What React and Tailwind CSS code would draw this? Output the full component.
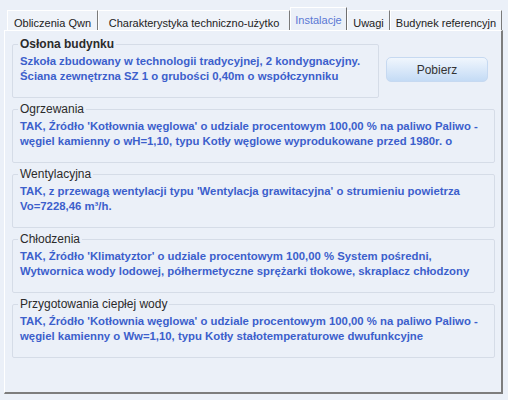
import React from 'react';

const tabs = [
  { label: 'Obliczenia Qwn', w: 'w-[91px]' },
  { label: 'Charakterystyka techniczno-użytko', w: 'w-[192px]' },
  { label: 'Instalacje', w: 'w-[57px]', active: true },
  { label: 'Uwagi', w: 'w-[43px]' },
  { label: 'Budynek referencyjn', w: 'w-[112px]' },
];

const sections = [
  {
    title: 'Ogrzewania',
    lines: [
      "TAK, Źródło 'Kotłownia węglowa' o udziale procentowym 100,00 % na paliwo Paliwo -",
      'węgiel kamienny o wH=1,10, typu Kotły węglowe wyprodukowane przed 1980r. o',
    ],
  },
  {
    title: 'Wentylacyjna',
    lines: [
      "TAK, z przewagą wentylacji typu 'Wentylacja grawitacyjna' o strumieniu powietrza",
      'Vo=7228,46 m³/h.',
    ],
  },
  {
    title: 'Chłodzenia',
    lines: [
      "TAK, Źródło 'Klimatyztor' o udziale procentowym 100,00 % System pośredni,",
      'Wytwornica wody lodowej, półhermetyczne sprężarki tłokowe, skraplacz chłodzony',
    ],
  },
  {
    title: 'Przygotowania ciepłej wody',
    lines: [
      "TAK, Źródło 'Kotłownia węglowa' o udziale procentowym 100,00 % na paliwo Paliwo -",
      'węgiel kamienny o Ww=1,10, typu Kotły stałotemperaturowe dwufunkcyjne',
    ],
  },
];

const GroupBox = ({ title, lines, bold, className }) => (
  <fieldset className={`h-[61px] border border-[#d5dce7] rounded-[2px] px-[7px] ${className}`}>
    <legend className={`text-[12px] leading-[14px] text-[#2b2b2b] px-[2px] -ml-[2px] ${bold ? 'font-bold' : ''}`}>
      {title}
    </legend>
    <div className="pt-[3px] text-[11.35px] leading-[15px] font-bold text-[#3c5fcc] whitespace-nowrap">
      {lines.map((l, i) => (
        <div key={i}>{l}</div>
      ))}
    </div>
  </fieldset>
);

const App = () => {
  return (
    <div className="w-[508px] h-[400px] bg-[#ebf0f8] font-['Liberation_Sans',Arial,sans-serif] pt-[6px] pl-[4px] overflow-hidden">
      {/* zakładki */}
      <div className="flex items-end h-[24px] pl-[3px] w-[499px] overflow-hidden relative z-10">
        {tabs.map((t) =>
          t.active ? (
            <div
              key={t.label}
              className={`${t.w} h-[24px] shrink-0 bg-[#ebf0f8] border-t border-l border-white border-r border-r-[#6f6f6f] -mb-px flex justify-center pt-[4px] text-[11px] text-[#5a78d4]`}
            >
              {t.label}
            </div>
          ) : (
            <div
              key={t.label}
              className={`${t.w} h-[20px] shrink-0 bg-[#eff3f9] border-t border-l border-white border-r border-r-[#7a7a7a] flex justify-center pt-[4px] text-[11px] text-[#222] whitespace-nowrap overflow-hidden`}
            >
              {t.label}
            </div>
          )
        )}
      </div>

      {/* panel */}
      <div className="w-[499px] h-[364px] border-t border-l border-white border-r-2 border-b-2 border-r-[#7d7d7d] border-b-[#7d7d7d] pt-[6px] pl-[7px] flex flex-col gap-[4px]">
        <div className="flex items-start">
          <GroupBox
            bold
            title="Osłona budynku"
            lines={[
              'Szkoła zbudowany w technologii tradycyjnej, 2 kondygnacyjny.',
              'Ściana zewnętrzna SZ 1 o grubości 0,40m o współczynniku',
            ]}
            className="w-[367px]"
          />
          <button className="ml-[7px] mt-[20px] w-[102px] h-[25px] rounded-[5px] border border-[#c6d9f1] bg-gradient-to-b from-[#f0f6fd] to-[#c4dbf5] text-[12px] text-[#333]">
            Pobierz
          </button>
        </div>
        {sections.map((s) => (
          <GroupBox key={s.title} title={s.title} lines={s.lines} className="w-[483px]" />
        ))}
      </div>
    </div>
  );
};

export default App;
